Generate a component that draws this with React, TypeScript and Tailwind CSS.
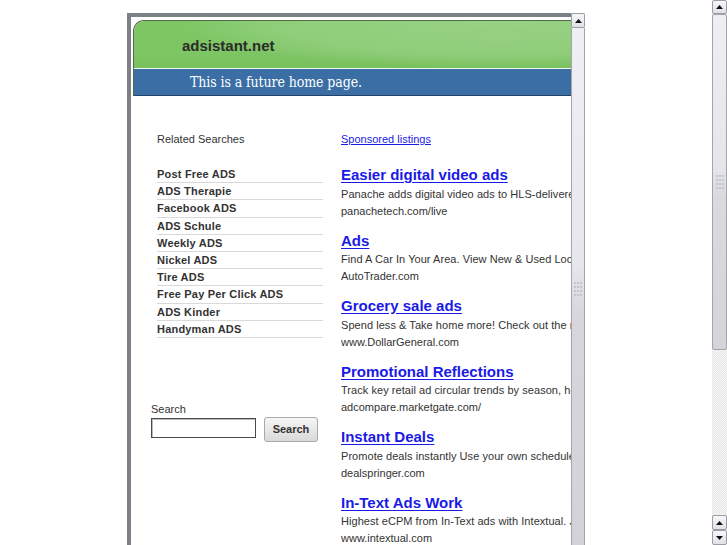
import React from "react";

const related = [
  "Post Free ADS",
  "ADS Therapie",
  "Facebook ADS",
  "ADS Schule",
  "Weekly ADS",
  "Nickel ADS",
  "Tire ADS",
  "Free Pay Per Click ADS",
  "ADS Kinder",
  "Handyman ADS",
];

const ads = [
  { t: "Easier digital video ads", d: "Panache adds digital video ads to HLS-delivered video streams.", u: "panachetech.com/live" },
  { t: "Ads", d: "Find A Car In Your Area. View New & Used Local Listings Today.", u: "AutoTrader.com" },
  { t: "Grocery sale ads", d: "Spend less & Take home more! Check out the new weekly ad.", u: "www.DollarGeneral.com" },
  { t: "Promotional Reflections", d: "Track key retail ad circular trends by season, holiday and more.", u: "adcompare.marketgate.com/" },
  { t: "Instant Deals", d: "Promote deals instantly Use your own schedule and pricing.", u: "dealspringer.com" },
  { t: "In-Text Ads Work", d: "Highest eCPM from In-Text ads with Intextual. Join now.", u: "www.intextual.com" },
];

function Arrow({ down = false }: { down?: boolean }) {
  return (
    <svg width="7" height="4" viewBox="0 0 7 4" className="block">
      {down ? <polygon points="0,0 7,0 3.5,4" fill="#111" /> : <polygon points="0,4 7,4 3.5,0" fill="#111" />}
    </svg>
  );
}

function Grip() {
  const dots = [];
  for (let r = 0; r < 4; r++) {
    for (let c = 0; c < 3; c++) {
      dots.push(<rect key={`${r}-${c}`} x={c * 3} y={r * 4} width="2" height="2" fill="#c4c4cc" />);
    }
  }
  return (
    <svg width="8" height="14" viewBox="0 0 8 14" className="block">
      {dots}
    </svg>
  );
}

function SbButton({ down = false, h }: { down?: boolean; h: string }) {
  return (
    <div
      className={`${h} w-full shrink-0 flex items-center justify-center rounded-[2px] border border-[#9c9ca4] bg-[linear-gradient(#f8f8fa,#e0e0e6)]`}
    >
      <Arrow down={down} />
    </div>
  );
}

export default function App() {
  return (
    <div className="w-[727px] h-[545px] overflow-hidden flex bg-white font-['Liberation_Sans',Arial,sans-serif]">
      {/* page */}
      <div className="w-[712px] h-[545px] flex justify-center pt-[13px]">
        <div className="w-[458px] h-[600px] flex shrink-0">
          {/* frame content */}
          <div className="w-[444px] h-full border-l-4 border-t-4 border-[#7c8185] pl-[2px] pt-[3px] overflow-hidden">
            {/* header */}
            <div className="w-[470px] rounded-tl-[11px] border-l border-t border-[#56684c] overflow-hidden">
              <div className="h-[47px] flex items-center pl-[48px] pt-[3px] bg-[radial-gradient(ellipse_320px_46px_at_78%_2px,rgba(255,255,255,0.2),rgba(255,255,255,0.14)_70%,transparent_100%),linear-gradient(to_bottom,#7dc764,#7ec564_70%,#78c05c)]">
                <span className="text-[15px] leading-[18px] font-bold text-[#2b2b2b]">adsistant.net</span>
              </div>
              <div className="h-px bg-[#f4f8f0]" />
              <div className="h-[27px] flex items-center pl-[56px] bg-[#3a6ea5] border-b border-[#22436b]">
                <span className="text-[14px] leading-[16px] text-white font-['DejaVu_Serif_Condensed','DejaVu_Serif',serif] font-stretch-condensed tracking-[-0.1px]">
                  This is a future home page.
                </span>
              </div>
            </div>

            {/* body */}
            <div className="flex pt-[36px] pl-[18px]">
              {/* left */}
              <div className="w-[190px] shrink-0">
                <div className="pl-[6px]">
                  <div className="text-[11px] leading-[14px] text-[#333]">Related Searches</div>
                  <div className="mt-[20px] w-[166px]">
                    {related.map((r) => (
                      <div
                        key={r}
                        className="text-[11px] leading-[16.2px] font-bold text-[#333] border-b border-[#d9d9d9] tracking-[0.2px]"
                      >
                        {r}
                      </div>
                    ))}
                  </div>
                </div>
                <div className="mt-[64px] text-[11px] leading-[14px] text-[#333]">Search</div>
                <div className="flex items-start gap-[8px] mt-px">
                  <div className="mt-px w-[105px] h-[20px] border border-[#4a4a4a] bg-white shadow-[inset_1px_1px_0_#bbb]" />
                  <div className="w-[54px] h-[25px] rounded-[3px] border border-[#a9a9a9] bg-[linear-gradient(#f6f6f6,#d9d9d9)] flex items-center justify-center text-[11px] font-bold text-[#333]">
                    Search
                  </div>
                </div>
              </div>

              {/* right */}
              <div className="flex-1 min-w-0 overflow-hidden">
                <div className="text-[11px] leading-[14px] text-[#1a1ae6] underline">Sponsored listings</div>
                <div className="mt-[20px] flex flex-col gap-[12px]">
                  {ads.map((a) => (
                    <div key={a.t} className="whitespace-nowrap">
                      <div className="text-[15px] leading-[18px] font-bold text-[#1a1ae6] underline underline-offset-[2px]">
                        {a.t}
                      </div>
                      <div className="mt-[1.5px] text-[11px] leading-[17px] text-[#333] tracking-[0.05px]">{a.d}</div>
                      <div className="text-[11px] leading-[17px] text-[#333]">{a.u}</div>
                    </div>
                  ))}
                </div>
              </div>
            </div>
          </div>

          {/* inner scrollbar */}
          <div className="w-[14px] h-full flex flex-col bg-[#dcdce2]">
            <SbButton h="h-[15px]" />
            <div className="h-[522px] w-full border-x border-[#a4a4ac] bg-[linear-gradient(#efeff4,#e6e6ec_45%,#d6d6dc_55%,#d2d2d8)] flex items-center justify-center">
              <Grip />
            </div>
          </div>
        </div>
      </div>

      {/* page scrollbar */}
      <div className="w-[15px] h-[545px] flex flex-col bg-[repeating-conic-gradient(#e6e6e6_0_25%,#f7f7f7_0_50%)] bg-[length:2px_2px]">
        <SbButton h="h-[14px]" />
        <div className="h-[336px] w-full shrink-0 rounded-[2px] border border-[#a4a4ac] bg-[linear-gradient(#efeff3,#e6e6ea_45%,#d9d9de_55%,#d4d4d9)] flex items-center justify-center">
          <Grip />
        </div>
        <div className="flex-1" />
        <SbButton h="h-[15px]" />
        <SbButton down h="h-[15px]" />
      </div>
    </div>
  );
}
